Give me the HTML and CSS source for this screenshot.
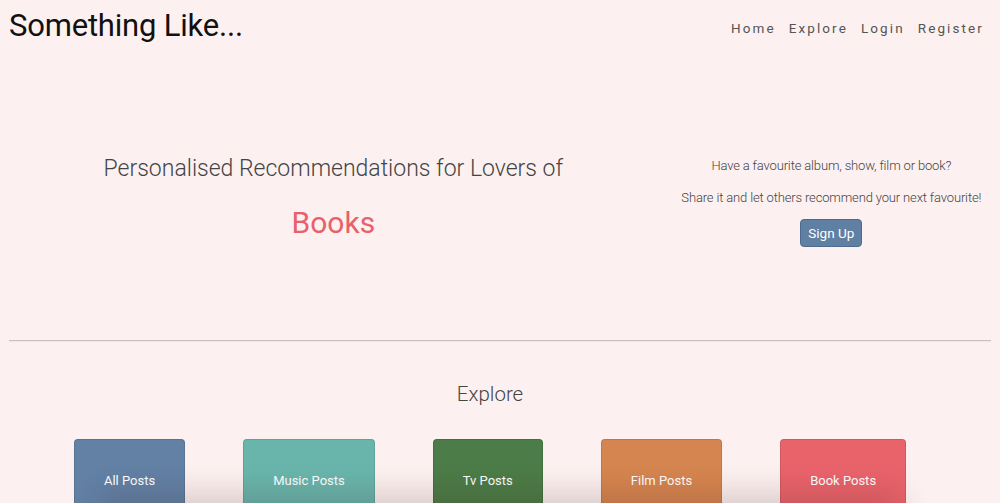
FILE: index.html
```html
<!DOCTYPE html>
<html lang="en">
<head>
<meta charset="utf-8">
<title>Something Like...</title>
<link rel="stylesheet" href="styles.css">
</head>
<body>
<header class="site-header">
  <a class="brand" href="#">Something Like...</a>
  <nav class="main-nav">
    <a href="#">Home</a>
    <a href="#">Explore</a>
    <a href="#">Login</a>
    <a href="#">Register</a>
  </nav>
</header>
<main>
  <section class="hero">
    <div class="hero-main">
      <h1 class="hero-title">Personalised Recommendations for Lovers of</h1>
      <p class="hero-topic">Books</p>
    </div>
    <div class="hero-side">
      <p>Have a favourite album, show, film or book?</p>
      <p>Share it and let others recommend your next favourite!</p>
      <a class="btn-signup" href="#">Sign Up</a>
    </div>
  </section>
  <hr class="divider">
  <section class="explore">
    <h2 class="explore-title">Explore</h2>
    <div class="cards">
      <a class="card card-all" href="#">All Posts</a>
      <a class="card card-music" href="#">Music Posts</a>
      <a class="card card-tv" href="#">Tv Posts</a>
      <a class="card card-film" href="#">Film Posts</a>
      <a class="card card-book" href="#">Book Posts</a>
    </div>
  </section>
</main>
<div class="bottom-shade"></div>
</body>
</html>
```
FILE: styles.css
```css
* { box-sizing: border-box; }
html, body { height: 100%; }
body {
  margin: 0;
  background: #fcf1f0;
  font-family: Roboto, "Liberation Sans", sans-serif;
  color: #222;
  overflow: hidden;
}
a { text-decoration: none; }
.site-header {
  display: flex;
  justify-content: space-between;
  align-items: flex-start;
  padding: 5px 16px 0 9px;
  height: 52px;
}
.brand {
  font-size: 31px;
  color: #111;
  line-height: 42px;
  letter-spacing: -0.2px;
}
.main-nav {
  display: flex;
  gap: 13px;
  padding-top: 15px;
}
.main-nav a {
  font-size: 13.5px;
  color: #555;
  letter-spacing: 2.1px;
  font-weight: 400;
}
.hero {
  display: grid;
  grid-template-columns: 2fr 1fr;
  padding-top: 102px;
  height: 288px;
  align-items: start;
}
.hero-main { text-align: center; }
.hero-title {
  margin: 0;
  font-weight: 300;
  font-size: 23px;
  color: #444;
  line-height: 30px;
}
.hero-topic {
  margin: 19px 0 0;
  font-size: 30px;
  color: #e9606a;
  line-height: 40px;
}
.hero-side {
  text-align: center;
  padding-top: 3px;
  padding-right: 4px;
}
.hero-side p {
  margin: 0 0 14px;
  font-size: 13px;
  letter-spacing: -0.15px;
  font-weight: 300;
  color: #444;
  line-height: 18px;
  white-space: nowrap;
}
.btn-signup {
  display: inline-block;
  margin-top: -2px;
  padding: 4px 7px;
  font-size: 13.5px;
  color: #fff;
  background: #5f7fa3;
  border: 1px solid #4d6b8e;
  border-radius: 4px;
  line-height: 18px;
}
.divider {
  margin: 0 9px;
  border: 0;
  border-top: 1px solid #cdbfbe;
  border-bottom: 1px solid #f4e6e5;
}
.explore {
  padding-right: 20px;
  text-align: center;
}
.explore-title {
  margin: 38px 0 0;
  font-size: 20.5px;
  font-weight: 300;
  color: #444;
  line-height: 28px;
}
.cards {
  display: flex;
  justify-content: center;
  gap: 58px;
  margin-top: 31px;
}
.card {
  display: flex;
  align-items: center;
  justify-content: center;
  height: 82px;
  padding: 0 29px;
  border-radius: 4px;
  color: #fff;
  font-size: 13px;
  border: 1px solid rgba(0,0,0,0.1);
}
.card-all { background: #6281a5; }
.card-music { background: #69b5ac; }
.card-tv { background: #4c7c47; }
.card-film { background: #d5854f; }
.card-book { background: #e9636b; }
.bottom-shade {
  position: fixed;
  left: 110px;
  right: 110px;
  bottom: -20px;
  height: 20px;
  box-shadow: 0 0 30px 10px rgba(60,30,30,0.18);
}
```
